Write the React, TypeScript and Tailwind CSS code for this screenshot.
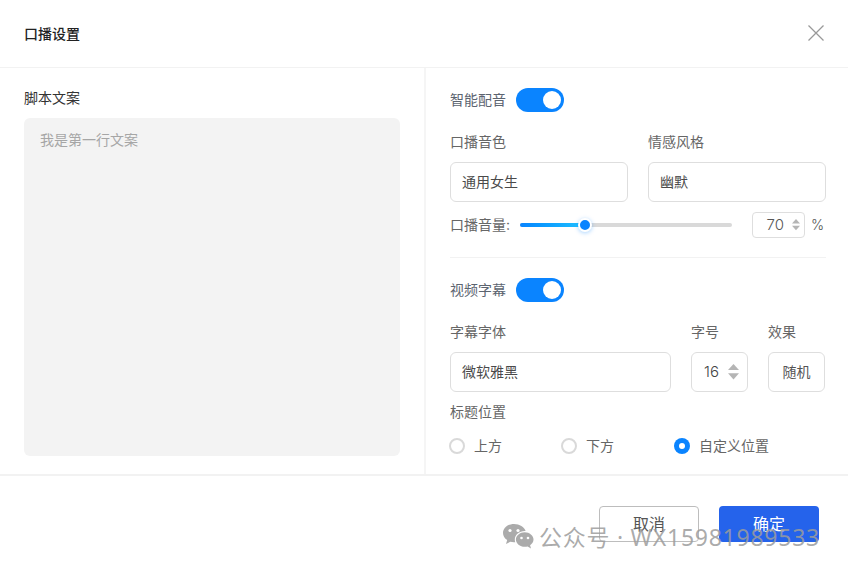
const sans = 'font-["Inter","Noto_Sans_CJK_SC",sans-serif]';

function Toggle() {
  return (
    <div className="flex h-6 w-12 items-center justify-end rounded-full bg-[#0a84ff] pr-[3px]">
      <div className="h-[18px] w-[18px] rounded-full bg-white" />
    </div>
  );
}

function Field({ value, className }: { value: string; className: string }) {
  return (
    <div className={`flex h-10 items-center rounded-md border border-[#dedede] pl-[11px] text-sm text-[#4a4a4a] ${className}`}>
      {value}
    </div>
  );
}

function Radio({ label, checked, className }: { label: string; checked?: boolean; className: string }) {
  return (
    <div className={`flex items-center ${className}`}>
      {checked ? (
        <div className="flex h-4 w-4 items-center justify-center rounded-full bg-[#0a84ff]">
          <div className="h-[6px] w-[6px] rounded-full bg-white" />
        </div>
      ) : (
        <div className="h-4 w-4 rounded-full border-2 border-[#d9d9d9]" />
      )}
      <span className="ml-[9px] text-sm text-[#666]">{label}</span>
    </div>
  );
}

function Arrows({ size }: { size: "sm" | "lg" }) {
  const w = size === "sm" ? "w-2" : "w-[11px]";
  return (
    <svg viewBox="0 0 10 14" className={`${w} text-[#b5b5b5]`} fill="currentColor">
      <path d="M5 0 10 5.5H0Z" />
      <path d="M5 14 0 8.5H10Z" />
    </svg>
  );
}

export default function App() {
  return (
    <div className={`relative h-[572px] w-[848px] overflow-hidden bg-white ${sans}`}>
      {/* Header */}
      <header className="flex h-[68px] items-center justify-between border-b border-[#f2f2f2] pl-6 pr-[23px]">
        <h1 className="text-sm font-medium text-[#222]">口播设置</h1>
        <svg width="18" height="18" viewBox="0 0 18 18" className="mb-[1px] text-[#999]" stroke="currentColor" fill="none" strokeWidth="1.3">
          <path d="M1.500 1.500 16.500 16.500M16.500 1.500 1.500 16.500" />
        </svg>
      </header>

      {/* Body */}
      <main className="flex h-[408px] border-b-2 border-[#f2f2f2]">
        <section className="flex w-[426px] shrink-0 flex-col border-r-2 border-[#f5f5f5] pb-[18px] pl-6 pr-6 pt-5">
          <h2 className="text-sm leading-[20px] text-[#333]">脚本文案</h2>
          <div className="mt-[10px] flex-1 rounded-md bg-[#f3f3f3] px-4 py-3 text-sm leading-5 text-[#a6a6a6]">
            我是第一行文案
          </div>
        </section>

        <section className="min-w-0 flex-1 overflow-hidden pl-6 pr-[22px] pt-5">
          <div className="flex h-6 items-center gap-[10px]">
            <span className="text-sm text-[#5c6470]">智能配音</span>
            <Toggle />
          </div>

          <div className="mt-5 flex gap-5">
            <div className="w-[178px]">
              <div className="text-sm leading-5 text-[#666]">口播音色</div>
              <Field value="通用女生" className="mt-[10px]" />
            </div>
            <div className="w-[178px]">
              <div className="text-sm leading-5 text-[#666]">情感风格</div>
              <Field value="幽默" className="mt-[10px]" />
            </div>
          </div>

          <div className="mt-[10px] flex h-[26px] items-center">
            <span className="w-[70px] shrink-0 text-sm text-[#666]">口播音量:</span>
            <div className="relative flex h-1 w-[212px] items-center rounded-full bg-[#d9d9d9]">
              <div className="h-1 w-[65px] rounded-full bg-gradient-to-r from-[#0a84ff] to-[#22c1ff]" />
              {/* slider thumb */}
              <div className="absolute left-[58px] h-[14px] w-[14px] rounded-full border-2 border-white bg-[#0a84ff] shadow-[0_1px_4px_rgba(10,132,255,0.35)]" />
            </div>
            <div className="ml-5 flex h-[26px] w-[53px] items-center justify-end gap-[8px] rounded border border-[#dedede] pr-1 text-[15px] font-light text-[#555]">
              70
              <Arrows size="sm" />
            </div>
            <span className="ml-[6px] text-sm font-light text-[#555]">%</span>
          </div>

          <div className="mt-[19px] h-px bg-[#f2f2f2]" />

          <div className="mt-5 flex h-6 items-center gap-[10px]">
            <span className="text-sm text-[#5c6470]">视频字幕</span>
            <Toggle />
          </div>

          <div className="mt-5 flex">
            <div className="w-[221px]">
              <div className="text-sm leading-5 text-[#666]">字幕字体</div>
              <Field value="微软雅黑" className="mt-[10px]" />
            </div>
            <div className="ml-5 w-[57px]">
              <div className="text-sm leading-5 text-[#666]">字号</div>
              <div className="mt-[10px] flex h-10 items-center justify-between rounded-md border border-[#dedede] pl-[12px] pr-2 text-[15px] font-light text-[#444]">
                16
                <Arrows size="lg" />
              </div>
            </div>
            <div className="ml-5 w-[57px]">
              <div className="text-sm leading-5 text-[#666]">效果</div>
              <div className="mt-[10px] flex h-10 items-center justify-center rounded-md border border-[#dedede] text-sm text-[#555]">
                随机
              </div>
            </div>
          </div>

          <div className="mt-[10px] text-sm leading-5 text-[#666]">标题位置</div>

          <div className="mt-[14px] flex h-5 items-center">
            <Radio label="上方" className="w-[112px] -ml-px" />
            <Radio label="下方" className="w-[113px]" />
            <Radio label="自定义位置" checked className="" />
          </div>
        </section>
      </main>

      {/* Footer */}
      <footer className="flex justify-end gap-5 pr-[29px] pt-[30px]">
        <button className="h-9 w-[100px] rounded-sm border border-[#bdbdbd] bg-white text-base text-[#555]">取消</button>
        <button className="h-9 w-[100px] rounded-sm bg-[#2563eb] text-base text-white">确定</button>
      </footer>

      {/* Watermark over the footer */}
      <div className="absolute left-[502px] top-[523px] flex items-center text-[#9c9c9c]/85">
        <svg width="32" height="28" viewBox="0 0 32 28" fill="currentColor">
          <path d="M12 1C5.900 1 1 5 1 10c0 2.900 1.600 5.400 4.200 7.100L4 21l4.200-2.200c1.200.3 2.400.5 3.800.5.4 0 .8 0 1.200-.1-.3-.9-.4-1.700-.4-2.600 0-4.800 4.500-8.600 10-8.600h.8C22.300 3.900 17.600 1 12 1Z" />
          <path d="M31.500 16.500c0-4-4-7.300-8.800-7.300s-8.800 3.300-8.800 7.300 4 7.300 8.800 7.300c1 0 2-.1 2.900-.4l3.400 2-.9-3.200c2-1.400 3.400-3.400 3.400-5.700Z" />
          <circle cx="8" cy="7.500" r="1.600" fill="#fff" />
          <circle cx="16" cy="7.500" r="1.600" fill="#fff" />
          <circle cx="19.500" cy="15" r="1.300" fill="#fff" />
          <circle cx="26" cy="15" r="1.300" fill="#fff" />
        </svg>
        <span className='ml-[5px] whitespace-nowrap font-["Noto_Sans","Noto_Sans_CJK_SC",sans-serif] text-[23px] leading-[28px] tracking-[0.75px]'>
          公众号 · WX15981989533
        </span>
      </div>
    </div>
  );
}
